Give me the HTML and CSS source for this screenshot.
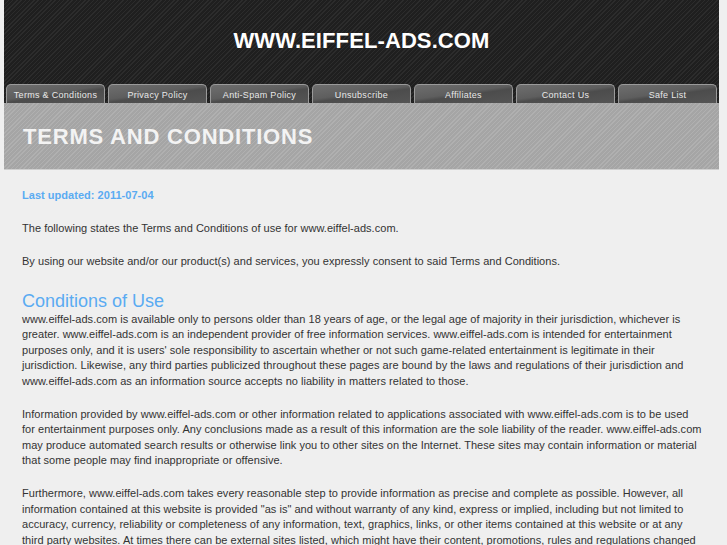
FILE: index.html
```html
<!DOCTYPE html>
<html>
<head>
<meta charset="utf-8">
<title>Terms and Conditions</title>
<link rel="stylesheet" href="styles.css">
</head>
<body>
<div class="page">
  <div class="header">
    <div class="site-title">WWW.EIFFEL-ADS.COM</div>
    <ul class="tabs">
      <li class="tab">Terms &amp; Conditions</li>
      <li class="tab">Privacy Policy</li>
      <li class="tab">Anti-Spam Policy</li>
      <li class="tab">Unsubscribe</li>
      <li class="tab">Affiliates</li>
      <li class="tab">Contact Us</li>
      <li class="tab">Safe List</li>
    </ul>
  </div>
  <div class="banner">
    <h1 class="page-title">TERMS AND CONDITIONS</h1>
  </div>
  <div class="content">
    <p class="updated">Last updated: 2011-07-04</p>
    <p>The following states the Terms and Conditions of use for www.eiffel-ads.com.</p>
    <p>By using our website and/or our product(s) and services, you expressly consent to said Terms and Conditions.</p>
    <h2 class="section">Conditions of Use</h2>
    <p>www.eiffel-ads.com is available only to persons older than 18 years of age, or the legal age of majority in their jurisdiction, whichever is greater. www.eiffel-ads.com is an independent provider of free information services. www.eiffel-ads.com is intended for entertainment purposes only, and it is users' sole responsibility to ascertain whether or not such game-related entertainment is legitimate in their jurisdiction. Likewise, any third parties publicized throughout these pages are bound by the laws and regulations of their jurisdiction and www.eiffel-ads.com as an information source accepts no liability in matters related to those.</p>
    <p>Information provided by www.eiffel-ads.com or other information related to applications associated with www.eiffel-ads.com is to be used for&nbsp;entertainment purposes only. Any conclusions made as a result of this information are the sole liability of the reader. <span class="url">www.eiffel-ads.com</span> may produce automated search results or otherwise link you to other sites on the Internet. These sites may contain information or material that some people may find inappropriate or offensive.</p>
    <p>Furthermore, www.eiffel-ads.com takes every reasonable step to provide information as precise and complete as possible. However, all information contained at this website is provided "as is" and without warranty of any kind, express or implied, including but not limited to accuracy, currency, reliability or completeness of any information, text, graphics, links, or other items contained at this website or at any third party websites. At times there can be external sites listed, which might have their content, promotions, rules and regulations changed at any time without notice.</p>
  </div>
</div>
</body>
</html>
```
FILE: styles.css
```css
html, body {
  margin: 0;
  padding: 0;
  background: #efefef;
}
body {
  font-family: "Liberation Sans", Arial, sans-serif;
  color: #333;
}
.page {
  width: 715px;
  margin-left: 4px;
}
.header {
  height: 103px;
  background-color: #232323;
  background-image: repeating-linear-gradient(135deg, #2c2c2c 0 1px, #1f1f1f 1px 3px);
  display: flex;
  flex-direction: column;
}
.site-title {
  color: #fff;
  font-weight: bold;
  font-size: 22px;
  letter-spacing: 0.1px;
  text-align: center;
  padding-top: 28px;
  line-height: 25px;
  height: 30px;
}
.tabs {
  list-style: none;
  margin: 0;
  padding: 0 0 0 2px;
  margin-top: auto;
  display: flex;
  gap: 3px;
}
.tab {
  width: 97px;
  height: 18px;
  border: 1px solid #9a9a9a;
  border-bottom: none;
  border-radius: 5px 5px 0 0;
  background: linear-gradient(172deg, #6e6e6e 0%, #5e5e5e 45%, #4c4c4c 55%, #555 100%);
  color: #e8e8e8;
  font-size: 9px;
  letter-spacing: 0.3px;
  text-align: center;
  line-height: 20px;
}
.banner {
  height: 66px;
  background-color: #a9a9a9;
  background-image: repeating-linear-gradient(135deg, #b0b0b0 0 1px, #a5a5a5 1px 3px);
  border-bottom: 1px solid #cfcfcf;
  display: flex;
  align-items: center;
}
.page-title {
  margin: 0;
  padding-left: 19px;
  padding-top: 2px;
  color: #f3f3f3;
  font-size: 22px;
  font-weight: bold;
  letter-spacing: 0.8px;
}
.content {
  padding: 18px 13px 0 18px;
  font-size: 11px;
  line-height: 15.5px;
  letter-spacing: 0.03px;
}
.content p {
  margin: 0 0 17.5px 0;
}
.content .updated {
  color: #5aabf2;
  font-weight: bold;
}
.url {
  white-space: nowrap;
}
.section {
  margin: 21px 0 0 0;
  font-size: 18px;
  font-weight: normal;
  letter-spacing: 0;
  line-height: 20px;
  padding-bottom: 1px;
  color: #5aabf2;
}
.section + p {
  margin-top: 0;
}
```
